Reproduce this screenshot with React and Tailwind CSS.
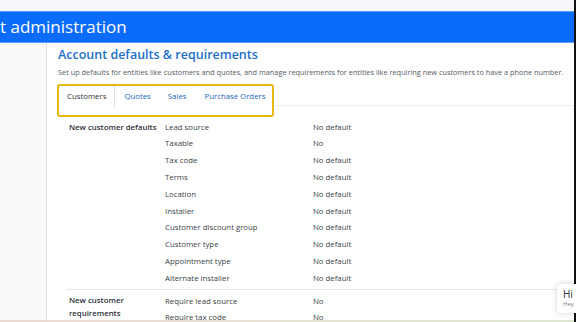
export default function App() {
  const defaults = [
    ["Lead source", "No default"],
    ["Taxable", "No"],
    ["Tax code", "No default"],
    ["Terms", "No default"],
    ["Location", "No default"],
    ["Installer", "No default"],
    ["Customer discount group", "No default"],
    ["Customer type", "No default"],
    ["Appointment type", "No default"],
    ["Alternate installer", "No default"],
  ];
  const reqs = [
    ["Require lead source", "No"],
    ["Require tax code", "No"],
  ];
  return (
    <div className="relative w-[576px] h-[322px] overflow-hidden bg-white flex font-['Open_Sans',sans-serif]">
      <div className="flex-1 flex flex-col min-w-0">
        <div className="h-[11px] bg-[#f4f6f9] shrink-0" />
        <div className="h-[32px] shrink-0 bg-[#0b6cfb] border-y border-[#5a9cfb] flex items-center text-white text-[17px] leading-none">
          <span className="-mt-[1px]">t administration</span>
        </div>
        <div className="flex-1 flex min-h-0">
          <div className="w-[47px] shrink-0 bg-[#f8f9fb] border-r border-[#dde1e6]" />
          <div className="flex-1 min-w-0 overflow-hidden pl-[11px]">
            <div className="pt-[3px] text-[12.5px] leading-[18px] font-semibold text-[#1d6fc9]">
              Account defaults &amp; requirements
            </div>
            <div className="mt-[2px] text-[7.35px] leading-[12px] text-[#555b62] whitespace-nowrap">
              Set up defaults for entities like customers and quotes, and manage requirements for entities like requiring new customers to have a phone number.
            </div>
            <div className="mt-[6px] flex items-start">
              <div className="w-[217px] h-[33px] -ml-[1px] border-2 border-[#e6b912] rounded-[3px] shrink-0">
                <div className="flex items-center h-[22px] text-[7.8px] text-[#2167b8]">
                  <div className="pl-[8px] pr-[8px] h-full flex items-center text-[#2d3136] border-r border-[#dfe3e8]">Customers</div>
                  <div className="pl-[9px] pr-[8px] h-full flex items-center">Quotes</div>
                  <div className="pl-[9px] pr-[9px] h-full flex items-center">Sales</div>
                  <div className="pl-[9px] h-full flex items-center">Purchase Orders</div>
                </div>
              </div>
              <div className="flex-1 h-[22px] border-b border-[#e9ecef]" />
            </div>
            <div className="pl-[11px] pt-[2px] text-[7.8px] text-[#3a3f45]">
              <div className="flex">
                <div className="w-[96px] shrink-0 leading-[16.8px] font-semibold text-[#2d3136]">New customer defaults</div>
                <div className="flex-1">
                  {defaults.map(([k, v]) => (
                    <div key={k} className="flex h-[16.8px] items-center">
                      <div className="w-[148px] shrink-0">{k}</div>
                      <div>{v}</div>
                    </div>
                  ))}
                </div>
              </div>
              <div className="mt-[2px] -ml-[3px] border-t border-[#e3e6ea]" />
              <div className="flex pt-[3px]">
                <div className="w-[96px] shrink-0 leading-[13px] pt-[1px] font-semibold text-[#2d3136]">New customer<br />requirements</div>
                <div className="flex-1">
                  {reqs.map(([k, v]) => (
                    <div key={k} className="flex h-[16.8px] items-center">
                      <div className="w-[148px] shrink-0">{k}</div>
                      <div>{v}</div>
                    </div>
                  ))}
                </div>
              </div>
            </div>
          </div>
        </div>
      </div>
      <div className="w-[2px] shrink-0 bg-[#111]" />
      <div className="absolute left-0 right-[2px] bottom-0 h-[2px] bg-gradient-to-r from-[#ecd9d3] via-[#e6e2d4] to-[#dde6d2]" />
      <div className="absolute left-[557px] top-[284px] w-[30px] h-[29px] bg-white rounded-[4px] shadow-[0_0_6px_rgba(0,0,0,0.18)] pl-[6px] pt-[4px]">
        <div className="text-[10px] leading-[12px] text-[#2d3136]">Hi</div>
        <div className="text-[6px] leading-[9px] text-[#7a8088]">Hey</div>
      </div>
    </div>
  );
}
